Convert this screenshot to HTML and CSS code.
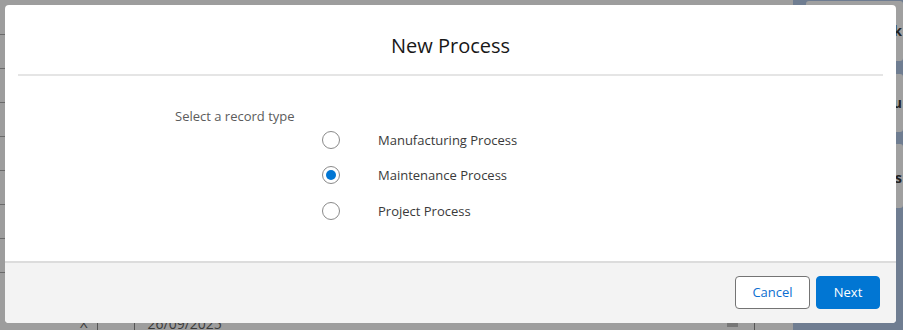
FILE: index.html
```html
<!DOCTYPE html>
<html>
<head>
<meta charset="utf-8">
<link rel="stylesheet" href="styles.css">
</head>
<body>
<div class="page">
  <div class="bg-main">
    <div class="bg-row"></div><div class="bg-row"></div><div class="bg-row"></div>
    <div class="bg-row"></div><div class="bg-row"></div><div class="bg-row"></div>
    <div class="bg-row"></div><div class="bg-row"></div>
    <div class="bg-last">
      <span class="bg-x">X</span><span class="bg-sep"></span><span class="bg-sep2"></span>
      <span class="bg-date">26/09/2025</span>
      <span class="bg-cal"></span><span class="bg-sep3"></span>
    </div>
  </div>
  <div class="bg-side">
    <div class="bg-card c1"><span class="peek">Quick Link</span></div>
    <div class="bg-card c2"><span class="peek">Menu</span></div>
    <div class="bg-card c3"><span class="peek">Documents</span></div>
  </div>

  <div class="modal">
    <header class="modal-header">
      <h2 class="modal-title">New Process</h2>
    </header>
    <div class="modal-body">
      <div class="field-label">Select a record type</div>
      <div class="options">
        <label class="option"><span class="radio"></span><span class="option-text">Manufacturing Process</span></label>
        <label class="option"><span class="radio checked"></span><span class="option-text">Maintenance Process</span></label>
        <label class="option"><span class="radio"></span><span class="option-text">Project Process</span></label>
      </div>
    </div>
    <footer class="modal-footer">
      <button class="btn btn-neutral">Cancel</button>
      <button class="btn btn-brand">Next</button>
    </footer>
  </div>
</div>
</body>
</html>
```
FILE: styles.css
```css
* { box-sizing: border-box; }
html, body { margin: 0; padding: 0; }
body {
  width: 903px;
  height: 330px;
  overflow: hidden;
  font-family: "Open Sans", "Noto Sans", sans-serif;
  background: #9d9d9d;
}
.page {
  position: relative;
  width: 903px;
  height: 330px;
  display: flex;
}
.bg-main {
  flex: 1;
  display: flex;
  flex-direction: column;
  padding-top: 1px;
}
.bg-row {
  height: 34px;
  border-bottom: 1px solid #6a6a6a;
  flex: none;
}
.bg-last {
  display: flex;
  align-items: center;
  height: 70px;
  padding-top: 38px;
  padding-bottom: 8px;
  flex: none;
  color: #3a3a3a;
  font-size: 14px;
}
.bg-x { margin-left: 80px; font-size: 13px; }
.bg-sep, .bg-sep2, .bg-sep3 { width: 1px; height: 14px; background: #555; }
.bg-sep { margin-left: 9px; }
.bg-sep2 { margin-left: 36px; }
.bg-date { margin-left: 13px; }
.bg-cal { margin-left: 505px; width: 11px; height: 8px; border-top: 3px solid #444; background: #777; }
.bg-sep3 { margin-left: 16px; }

.bg-side {
  width: 110px;
  background: #6f7d91;
  display: flex;
  flex-direction: column;
  gap: 12px;
  padding: 1px 0 0 13px;
}
.bg-card {
  background: #a0a0a0;
  border-radius: 3px;
  overflow: hidden;
  white-space: nowrap;
  font-weight: 700;
  font-size: 14px;
  color: #222;
  text-align: right;
  padding-right: 1px;
}
.c1 { height: 60px; padding-top: 20px; }
.c2 { height: 58px; padding-top: 19px; margin-top: 1px; }
.c3 { height: 64px; padding-top: 24px; }

.modal {
  position: absolute;
  left: 5px;
  top: 5px;
  width: 891px;
  height: 318px;
  background: #fff;
  border-radius: 4px;
  display: flex;
  flex-direction: column;
  overflow: hidden;
}
.modal-header {
  margin: 0 13px;
  height: 71px;
  border-bottom: 2px solid #e5e5e5;
  display: flex;
  justify-content: center;
  align-items: center;
  flex: none;
}
.modal-title {
  margin: 0;
  font-weight: 400;
  font-size: 20px;
  color: #181818;
  padding-top: 12px;
}
.modal-body {
  flex: 1;
  padding: 31px 0 0 170px;
}
.field-label {
  font-size: 13px;
  color: #5c5c5c;
  line-height: 18px;
}
.options {
  display: flex;
  flex-direction: column;
  padding-left: 147px;
  margin-top: -3px;
}
.option {
  display: flex;
  align-items: center;
  height: 35.5px;
}
.radio {
  width: 18px;
  height: 18px;
  border: 1px solid #8a8a8a;
  border-radius: 50%;
  background: #fff;
  position: relative;
  flex: none;
}
.radio.checked::after {
  content: "";
  position: absolute;
  left: 3px;
  top: 3px;
  width: 10px;
  height: 10px;
  border-radius: 50%;
  background: #0176d3;
}
.option-text {
  margin-left: 38px;
  font-size: 13px;
  color: #3a3a3a;
}
.modal-footer {
  height: 62px;
  flex: none;
  background: #f3f3f3;
  border-top: 2px solid #dcdcdc;
  display: flex;
  justify-content: flex-end;
  align-items: center;
  gap: 6px;
  padding: 0 16px 2px 0;
}
.btn {
  font-family: inherit;
  font-size: 13px;
  height: 33px;
  border-radius: 4px;
  padding: 0;
  cursor: pointer;
}
.btn-neutral {
  width: 75px;
  background: #fff;
  border: 1px solid #747474;
  color: #0b6ed0;
}
.btn-brand {
  width: 64px;
  background: #0176d3;
  border: 1px solid #0176d3;
  color: #fff;
}
```
